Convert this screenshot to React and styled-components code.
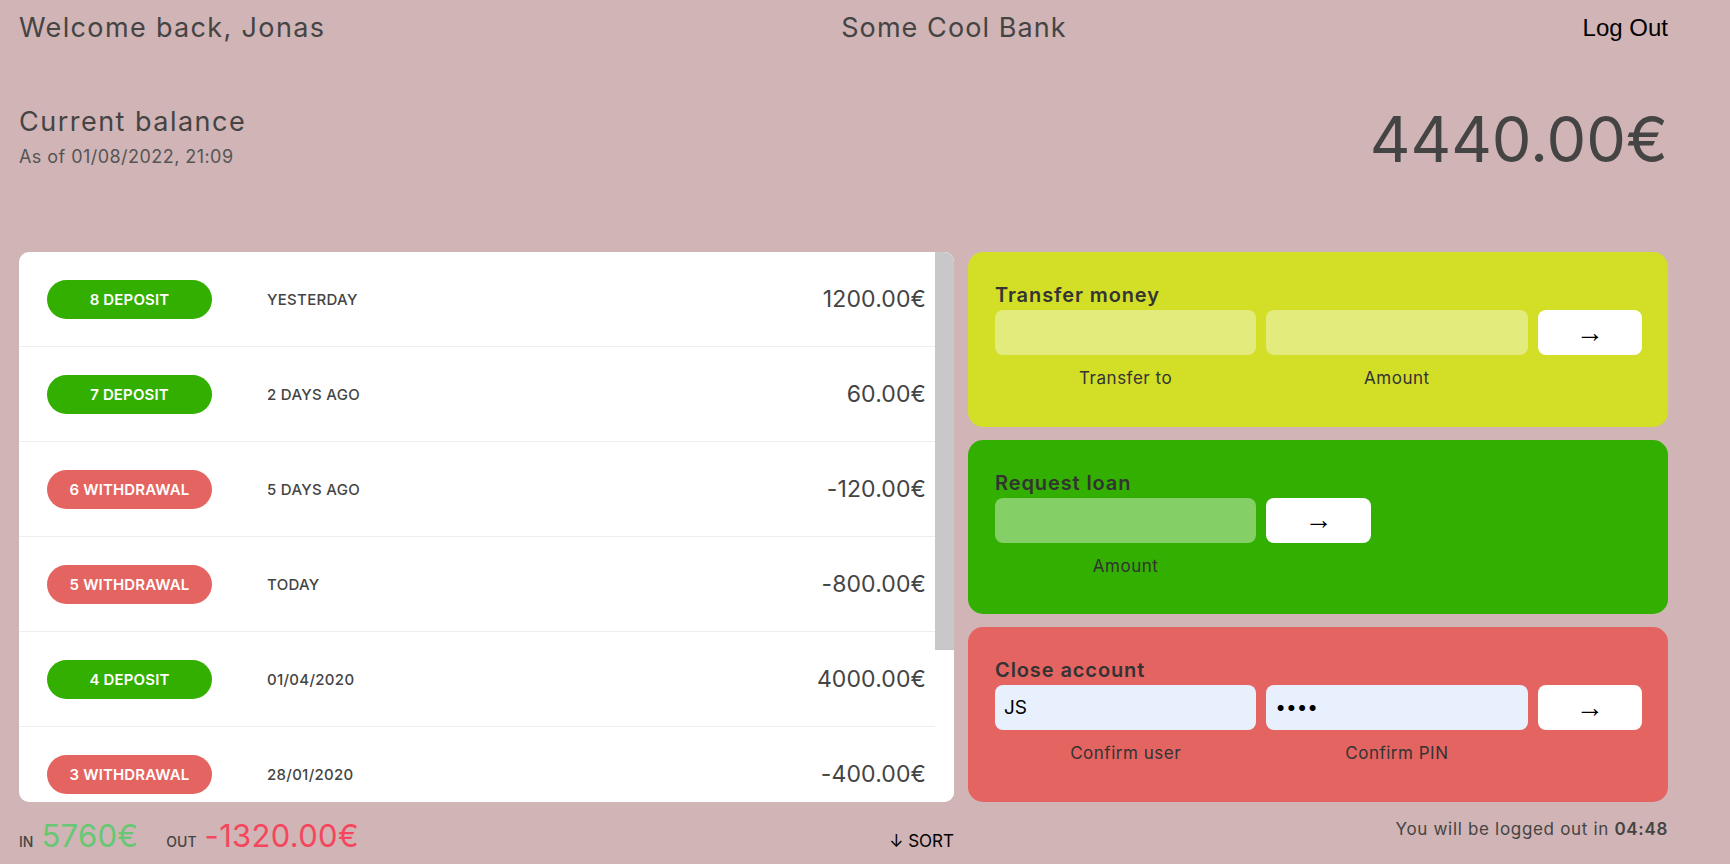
import React from "react";
import styled, { createGlobalStyle } from "styled-components";

const GlobalStyle = createGlobalStyle`
  *, *::before, *::after { box-sizing: border-box; margin: 0; padding: 0; }
  body {
    margin: 0;
    background: #d1b4b5;
    font-family: "Inter", "Noto Sans", sans-serif;
    color: #444;
  }
`;

const Page = styled.div`
  padding: 0 62px 0 19px;
`;

const Nav = styled.nav`
  display: flex;
  justify-content: space-between;
  align-items: center;
  height: 55px;
`;

const Welcome = styled.p`
  font-size: 27px;
  font-weight: 400;
  letter-spacing: 0.05em;
  color: #444;
`;

const Logo = styled.p`
  font-size: 27px;
  font-weight: 400;
  letter-spacing: 0.04em;
  color: #444;
`;

const LogOutButton = styled.button`
  background: none;
  border: none;
  font-family: "Liberation Sans", Arial, sans-serif;
  font-size: 24px;
  color: #000;
  cursor: pointer;
`;

const BalanceSection = styled.section`
  display: flex;
  justify-content: space-between;
  align-items: flex-start;
  margin-top: 49px;
`;

const BalanceInfo = styled.div`
  margin-top: 2px;
`;

const BalanceLabel = styled.p`
  font-size: 27px;
  line-height: 32px;
  font-weight: 400;
  letter-spacing: 0.055em;
  color: #444;
`;

const BalanceDate = styled.p`
  margin-top: 7px;
  font-size: 18px;
  line-height: 24px;
  letter-spacing: 0.025em;
  color: #555;
`;

const BalanceValue = styled.p`
  margin-top: 3px;
  font-size: 63px;
  line-height: 64px;
  font-weight: 400;
  letter-spacing: 0;
  color: #444;
`;

const MainGrid = styled.main`
  display: grid;
  grid-template-columns: 935px 700px;
  grid-template-rows: 550px auto;
  column-gap: 14px;
  margin-top: 81px;
`;

const MovementsPanel = styled.div`
  display: flex;
  background: #fff;
  border-radius: 10px;
  overflow: hidden;
`;

const MovementsList = styled.div`
  flex: 1;
  overflow-y: auto;
  scrollbar-width: none;
`;

const ScrollTrack = styled.div`
  width: 19px;
  flex-shrink: 0;
  background: #fff;
`;

const ScrollThumb = styled.div`
  width: 100%;
  background: #c8c8c8;
`;

const Row = styled.div`
  display: flex;
  align-items: center;
  height: 95px;
  padding: 0 9px 0 28px;
  border-bottom: 1px solid #eee;
`;

const TypeBadge = styled.div`
  width: 165px;
  height: 39px;
  border-radius: 20px;
  display: flex;
  align-items: center;
  justify-content: center;
  background: ${(p) => (p.$type === "deposit" ? "#32af00" : "#e46462")};
  color: #fff;
  font-size: 15px;
  font-weight: 600;
  text-transform: uppercase;
  letter-spacing: 0.01em;
`;

const MoveDate = styled.div`
  margin-left: 55px;
  font-size: 15px;
  font-weight: 500;
  text-transform: uppercase;
  letter-spacing: 0.02em;
  color: #444;
`;

const MoveValue = styled.div`
  margin-left: auto;
  font-size: 23px;
  letter-spacing: 0.005em;
  color: #444;
`;

const Operations = styled.div`
  display: flex;
  flex-direction: column;
  gap: 13px;
`;

const opColors = {
  transfer: "#d3de27",
  loan: "#32af00",
  close: "#e46462",
};

const Operation = styled.div`
  flex: 1;
  border-radius: 15px;
  padding: 31px 26px 0 27px;
  background: ${(p) => opColors[p.$kind]};
`;

const OpTitle = styled.h2`
  font-size: 20px;
  line-height: 24px;
  font-weight: 600;
  letter-spacing: 0.045em;
  color: #333;
  margin-bottom: 3px;
`;

const Form = styled.form`
  display: grid;
  grid-template-columns: ${(p) => (p.$loan ? "2.5fr 1fr 2.5fr" : "2.5fr 2.5fr 1fr")};
  grid-template-rows: 45px auto;
  column-gap: 10px;
  row-gap: 13px;
`;

const Input = styled.input`
  width: 100%;
  height: 45px;
  border: none;
  border-radius: 8px;
  padding: 0 9px;
  font-family: "Inter", sans-serif;
  font-size: 19px;
  color: #000;
  background: ${(p) => (p.$filled ? "#e8f0fe" : "rgba(255, 255, 255, 0.4)")};
  outline: none;
`;

const Submit = styled.button`
  height: 45px;
  border: none;
  border-radius: 8px;
  background: #fff;
  font-family: "Liberation Sans", Arial, sans-serif;
  font-size: 28px;
  line-height: 1;
  color: #000;
  cursor: pointer;
`;

const FormLabel = styled.label`
  text-align: center;
  font-size: 17px;
  line-height: 20px;
  letter-spacing: 0.03em;
  color: #333;
`;

const Summary = styled.div`
  display: flex;
  align-items: baseline;
  padding-top: 15px;
`;

const SumLabel = styled.span`
  font-size: 14px;
  font-weight: 500;
  text-transform: uppercase;
  color: #444;
  margin-right: 8px;
`;

const SumValue = styled.span`
  font-size: 31px;
  line-height: 37px;
  letter-spacing: 0.01em;
  color: ${(p) => (p.$in ? "#66c873" : "#f5465d")};
  margin-right: 28px;
`;

const SortButton = styled.button`
  margin-left: auto;
  background: none;
  border: none;
  font-family: inherit;
  font-size: 17px;
  font-weight: 400;
  color: #000;
  cursor: pointer;
`;

const Timer = styled.p`
  padding-top: 17px;
  text-align: right;
  font-size: 17px;
  line-height: 20px;
  letter-spacing: 0.04em;
  color: #444;
  strong { font-weight: 600; }
`;

const movements = [
  { n: 8, type: "deposit", date: "Yesterday", value: "1200.00€" },
  { n: 7, type: "deposit", date: "2 days ago", value: "60.00€" },
  { n: 6, type: "withdrawal", date: "5 days ago", value: "-120.00€" },
  { n: 5, type: "withdrawal", date: "Today", value: "-800.00€" },
  { n: 4, type: "deposit", date: "01/04/2020", value: "4000.00€" },
  { n: 3, type: "withdrawal", date: "28/01/2020", value: "-400.00€" },
  { n: 2, type: "deposit", date: "15/12/2019", value: "300.00€" },
  { n: 1, type: "deposit", date: "01/11/2019", value: "200.00€" },
];

const VISIBLE_HEIGHT = 550;
const ROW_HEIGHT = 95;

export default function App() {
  const thumbRatio = Math.min(1, VISIBLE_HEIGHT / (movements.length * ROW_HEIGHT));
  return (
    <>
      <GlobalStyle />
      <Page>
        <Nav>
          <Welcome>Welcome back, Jonas</Welcome>
          <Logo>Some Cool Bank</Logo>
          <LogOutButton>Log Out</LogOutButton>
        </Nav>

        <BalanceSection>
          <BalanceInfo>
            <BalanceLabel>Current balance</BalanceLabel>
            <BalanceDate>As of 01/08/2022, 21:09</BalanceDate>
          </BalanceInfo>
          <BalanceValue>4440.00€</BalanceValue>
        </BalanceSection>

        <MainGrid>
          <MovementsPanel>
            <MovementsList>
              {movements.map((m) => (
                <Row key={m.n}>
                  <TypeBadge $type={m.type}>
                    {m.n} {m.type}
                  </TypeBadge>
                  <MoveDate>{m.date}</MoveDate>
                  <MoveValue>{m.value}</MoveValue>
                </Row>
              ))}
            </MovementsList>
            <ScrollTrack>
              <ScrollThumb style={{ height: `${thumbRatio * 100}%` }} />
            </ScrollTrack>
          </MovementsPanel>

          <Operations>
            <Operation $kind="transfer">
              <OpTitle>Transfer money</OpTitle>
              <Form onSubmit={(e) => e.preventDefault()}>
                <Input type="text" />
                <Input type="number" />
                <Submit>→</Submit>
                <FormLabel>Transfer to</FormLabel>
                <FormLabel>Amount</FormLabel>
              </Form>
            </Operation>

            <Operation $kind="loan">
              <OpTitle>Request loan</OpTitle>
              <Form $loan onSubmit={(e) => e.preventDefault()}>
                <Input type="number" />
                <Submit>→</Submit>
                <span />
                <FormLabel>Amount</FormLabel>
              </Form>
            </Operation>

            <Operation $kind="close">
              <OpTitle>Close account</OpTitle>
              <Form onSubmit={(e) => e.preventDefault()}>
                <Input type="text" $filled defaultValue="JS" />
                <Input type="password" $filled defaultValue="1111" />
                <Submit>→</Submit>
                <FormLabel>Confirm user</FormLabel>
                <FormLabel>Confirm PIN</FormLabel>
              </Form>
            </Operation>
          </Operations>

          <Summary>
            <SumLabel>In</SumLabel>
            <SumValue $in>5760€</SumValue>
            <SumLabel>Out</SumLabel>
            <SumValue>-1320.00€</SumValue>
            <SortButton>↓ SORT</SortButton>
          </Summary>

          <Timer>
            You will be logged out in <strong>04:48</strong>
          </Timer>
        </MainGrid>
      </Page>
    </>
  );
}
